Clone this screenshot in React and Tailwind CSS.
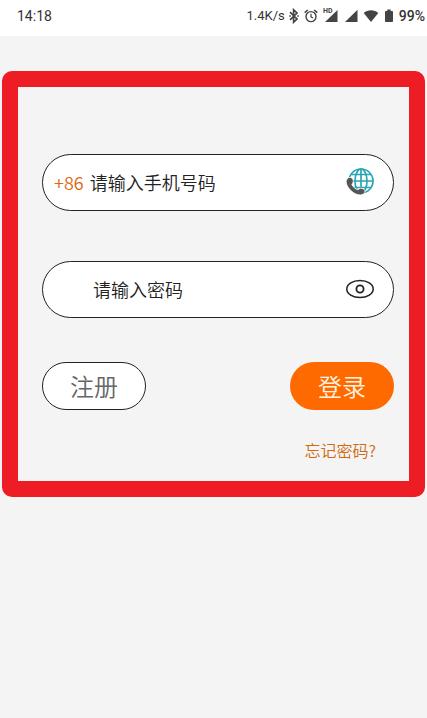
import React from "react";

const cjk = "font-['Noto_Sans_CJK_SC',sans-serif]";

function BluetoothIcon() {
  return (
    <svg className="h-4 w-2.5 shrink-0" viewBox="1 0 10 16" fill="none" stroke="#444" strokeWidth="1.700" aria-hidden="true">
      <path d="M2 4.2 9 11 5.6 14.2V1.8L9 5 2 11.8" />
      <path d="M1.2 8h1.6M9.2 8h1.6" strokeWidth="1.7" />
    </svg>
  );
}

function AlarmIcon() {
  return (
    <svg className="h-4 w-4 shrink-0" viewBox="0 0 16 16" fill="none" stroke="#444" strokeWidth="1.4" aria-hidden="true">
      <circle cx="8" cy="8.6" r="5" />
      <path d="M1.7 4.6 4.8 2M14.3 4.6 11.2 2" strokeWidth="1.6" />
      <path d="M8 5.8v3l2 1.2" strokeWidth="1.2" />
    </svg>
  );
}

function HdSignalIcon() {
  return (
    <svg className="h-4 w-4 shrink-0 overflow-visible" viewBox="0 0 16 16" fill="#444" aria-hidden="true">
      <path d="M14.500 2V14H2Z" />
      <path d="M0 0H9.500V6H0Z" fill="#fff" />
      <text x="0" y="5" fontSize="7" fontWeight="700" fontFamily="Roboto, sans-serif">HD</text>
    </svg>
  );
}

function SignalIcon() {
  return (
    <svg className="h-4 w-4 shrink-0" viewBox="0 0 16 16" fill="#444" aria-hidden="true">
      <path d="M14.500 1.800V14H2Z" />
    </svg>
  );
}

function WifiIcon() {
  return (
    <svg className="h-4 w-4 shrink-0" viewBox="0 0 16 16" fill="#444" aria-hidden="true">
      <path d="M.7 5C4.800 1.400 11.200 1.400 15.300 5L8 14Z" />
    </svg>
  );
}

function BatteryIcon() {
  return (
    <svg className="h-4 w-3 shrink-0" viewBox="-2 0 12 16" fill="#444" aria-hidden="true">
      <path d="M2.300 1.500h3.400V3H7.200q.8 0 .8.800v9.400q0 .8-.8.800H.8q-.8 0-.8-.8V3.800Q0 3 .8 3h1.500Z" />
    </svg>
  );
}

function GlobePhoneIcon() {
  return (
    <svg className="size-7" viewBox="0 0 28 28" fill="none" aria-hidden="true">
      <g stroke="#2aa5b3" strokeWidth="1.700">
        <circle cx="15" cy="13" r="12" />
        <ellipse cx="15" cy="13" rx="6" ry="12" />
        <path d="M15 1v24M3 13h24M5 6.500h20M5 19.500h20" />
      </g>
      <path
        d="M1 11C2.500 8.800 5.500 9 6.700 11C7.800 13 7.300 15 5.800 16.200C6.800 18.800 9 21 12 21.800C13.300 20 15.700 19.800 17.500 21C19.500 22.500 19.300 25 17.200 26.200C14 28 8.500 26.300 4.800 22.500C.8 18.500 -1 14 1 11Z"
        fill="#555"
        stroke="#fff"
        strokeWidth=".8"
      />
    </svg>
  );
}

function EyeIcon() {
  return (
    <svg className="h-5 w-7" viewBox="0 0 28 20" fill="none" stroke="#222" strokeWidth="1.500" aria-hidden="true">
      <ellipse cx="14" cy="10" rx="13.200" ry="8.600" />
      <circle cx="14" cy="10" r="3.600" strokeWidth="1.800" />
    </svg>
  );
}

function StatusBar() {
  return (
    <header className="flex h-9 items-center justify-between bg-white pr-0.5 pl-[17px] pb-1 font-[Roboto,sans-serif] text-[#333]">
      <time className="text-sm">14:18</time>
      <div className="flex items-center gap-1">
        <span className="text-[13px]">1.4K/s</span>
        <BluetoothIcon />
        <AlarmIcon />
        <HdSignalIcon />
        <SignalIcon />
        <WifiIcon />
        <BatteryIcon />
        <span className="text-sm font-medium">99%</span>
      </div>
    </header>
  );
}

const field = "flex h-[57px] items-center rounded-full border border-[#222] bg-white pr-[19px] pb-0.5";
const input = "min-w-0 flex-1 bg-transparent text-lg font-[350] text-[#222] outline-none placeholder:text-[#222] placeholder:opacity-100";

export default function App() {
  return (
    <div className={`min-h-screen bg-[#f4f4f4] ${cjk}`}>
      <StatusBar />
      <main className="px-0.5 pt-[35px]">
        <form
          className="rounded-[10px] bg-[#ee1c25] p-4"
          onSubmit={(e) => e.preventDefault()}
        >
          <div className="bg-[#f4f4f4] pt-[67px] pr-[15px] pb-[19px] pl-6">
            <div className={`${field} pl-[11px]`}>
              <span className="mr-1.5 text-lg font-[350] text-[#e0660f]">+86</span>
              <input className={input} type="tel" aria-label="手机号码" placeholder="请输入手机号码" />
              <button type="button" aria-label="选择国家或地区">
                <GlobePhoneIcon />
              </button>
            </div>
            <div className={`${field} mt-[50px] pl-[50px]`}>
              <input className={input} type="password" aria-label="密码" placeholder="请输入密码" />
              <button type="button" aria-label="显示密码">
                <EyeIcon />
              </button>
            </div>
            <div className="mt-11 flex justify-between">
              <button type="button" className="h-12 w-[104px] rounded-full border border-[#222] bg-white text-2xl font-[350] text-[#666]">
                注册
              </button>
              <button type="submit" className="h-12 w-[104px] rounded-full bg-[#ff6a00] text-2xl font-[350] text-[#fff3e0]">
                登录
              </button>
            </div>
            <div className="mt-7 pr-[18px] text-right text-base font-[350]">
              <a href="#forgot" className="text-[#cf6a10]">忘记密码?</a>
            </div>
          </div>
        </form>
      </main>
    </div>
  );
}
